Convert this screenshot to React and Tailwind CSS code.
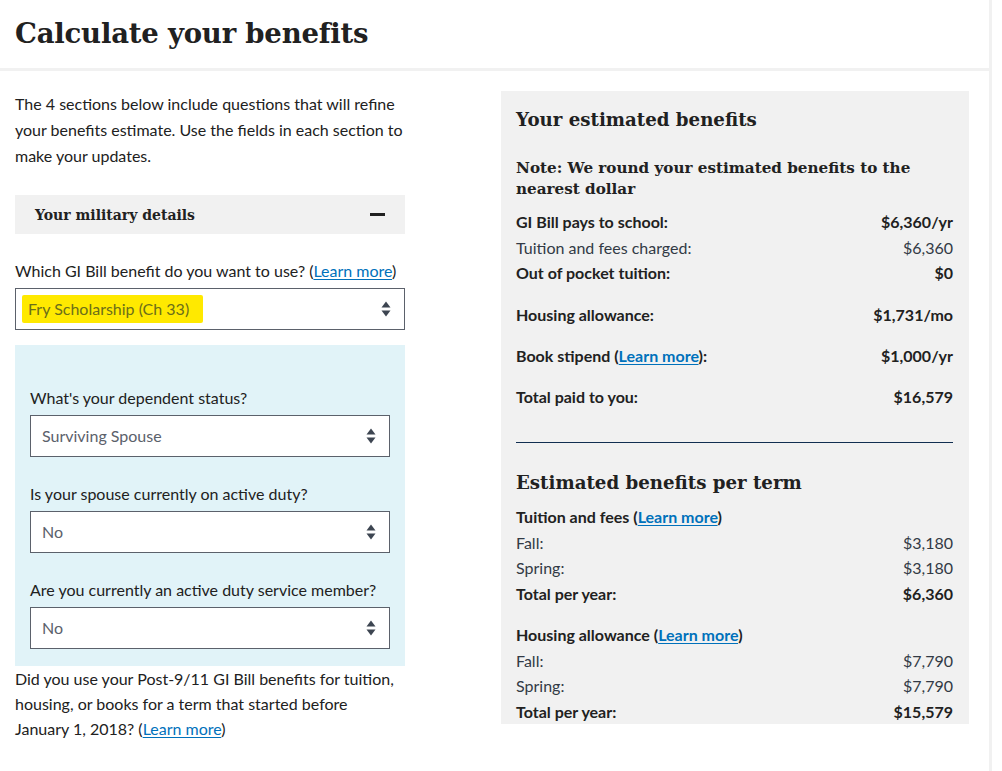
const sans = { fontFamily: 'Lato, "Open Sans", sans-serif' }
const serif = { fontFamily: '"DejaVu Serif", "Liberation Serif", serif' }

function LearnMore() {
  return (
    <>
      (<a href="#" className="text-[#0071bb] underline underline-offset-2">Learn more</a>)
    </>
  )
}

function SortIcon() {
  return (
    <svg width="10" height="16" viewBox="0 0 10 16" className="shrink-0">
      <path d="M5 0.5 L9.5 6.5 L0.5 6.5 Z" fill="#3d4551" />
      <path d="M0.5 9.5 L9.5 9.5 L5 15.5 Z" fill="#3d4551" />
    </svg>
  )
}

function Select({ children }) {
  return (
    <div className="h-[42px] border border-[#5b616b] bg-white flex items-center justify-between pl-[11px] pr-[13px] text-[#5b616b]">
      <span>{children}</span>
      <SortIcon />
    </div>
  )
}

function Row({ label, value, bold, className = '' }) {
  return (
    <div className={`flex justify-between ${bold ? 'font-bold text-[#212121]' : 'text-[#323a45]'} ${className}`}>
      <span>{label}</span>
      <span>{value}</span>
    </div>
  )
}

export default function App() {
  return (
    <div className="min-h-screen bg-white text-[#212121] text-[16px]" style={sans}>
      <div className="w-[992px] min-h-screen border-r-[3px] border-[#f1f1f1]">
        <header className="h-[71px] border-b-[3px] border-[#f1f1f1] px-[15px] flex items-center">
          <h1 className="text-[27.5px] font-bold tracking-[-0.2px]" style={serif}>
            Calculate your benefits
          </h1>
        </header>

        <div className="flex items-start pl-[15px] pt-[20px] gap-[96px]">
          {/* Left: questions */}
          <div className="w-[390px] leading-[26px]">
            <p>
              The 4 sections below include questions that will refine your benefits estimate. Use the
              fields in each section to make your updates.
            </p>

            <div className="mt-[26px] h-[39px] bg-[#f1f1f1] flex items-center justify-between pl-[20px] pr-[20px]">
              <span className="font-bold text-[14px]" style={serif}>Your military details</span>
              <span className="w-[15px] h-[3px] bg-[#212121]" />
            </div>

            <p className="mt-[24px] mb-[4px]">
              Which GI Bill benefit do you want to use? <LearnMore />
            </p>
            <div className="h-[42px] border border-[#5b616b] bg-white flex items-center justify-between pl-[6px] pr-[13px]">
              <span className="bg-[#ffe900] text-[#6b6e1a] pl-[6px] pr-[14px] py-[1px] rounded-[2px]">
                Fry Scholarship (Ch 33)
              </span>
              <SortIcon />
            </div>

            <div className="mt-[15px] bg-[#e1f3f8] px-[15px] pt-[40px] pb-[17px]">
              <p className="mb-[4px]">What's your dependent status?</p>
              <Select>Surviving Spouse</Select>
              <p className="mt-[24px] mb-[4px]">Is your spouse currently on active duty?</p>
              <Select>No</Select>
              <p className="mt-[24px] mb-[4px]">Are you currently an active duty service member?</p>
              <Select>No</Select>
            </div>

            <p className="leading-[25px]">
              Did you use your Post-9/11 GI Bill benefits for tuition, housing, or books for a term that
              started before January 1, 2018? <LearnMore />
            </p>
          </div>

          {/* Right: estimated benefits */}
          <div className="w-[468px] bg-[#f1f1f1] pl-[15px] pr-[16px] pt-[15px] leading-[25.5px]">
            <h2 className="text-[18.2px] font-bold leading-[28px]" style={serif}>Your estimated benefits</h2>
            <p className="mt-[24px] text-[15.2px] font-bold leading-[21px]" style={serif}>
              Note: We round your estimated benefits to the nearest dollar
            </p>

            <Row className="mt-[9px]" bold label="GI Bill pays to school:" value="$6,360/yr" />
            <Row label="Tuition and fees charged:" value="$6,360" />
            <Row bold label="Out of pocket tuition:" value="$0" />
            <Row className="mt-[16px]" bold label="Housing allowance:" value="$1,731/mo" />
            <Row
              className="mt-[16px]"
              bold
              label={<>Book stipend <LearnMore />:</>}
              value="$1,000/yr"
            />
            <Row className="mt-[15px]" bold label="Total paid to you:" value="$16,579" />

            <hr className="mt-[33px] border-0 border-t border-[#112e51]" />

            <h2 className="mt-[26px] text-[18.2px] font-bold leading-[28px]" style={serif}>
              Estimated benefits per term
            </h2>
            <p className="mt-[7px] font-bold">Tuition and fees <LearnMore /></p>
            <Row label="Fall:" value="$3,180" />
            <Row label="Spring:" value="$3,180" />
            <Row bold label="Total per year:" value="$6,360" />

            <p className="mt-[16px] font-bold">Housing allowance <LearnMore /></p>
            <Row label="Fall:" value="$7,790" />
            <Row label="Spring:" value="$7,790" />
            <Row bold label="Total per year:" value="$15,579" />
          </div>
        </div>
      </div>
    </div>
  )
}
